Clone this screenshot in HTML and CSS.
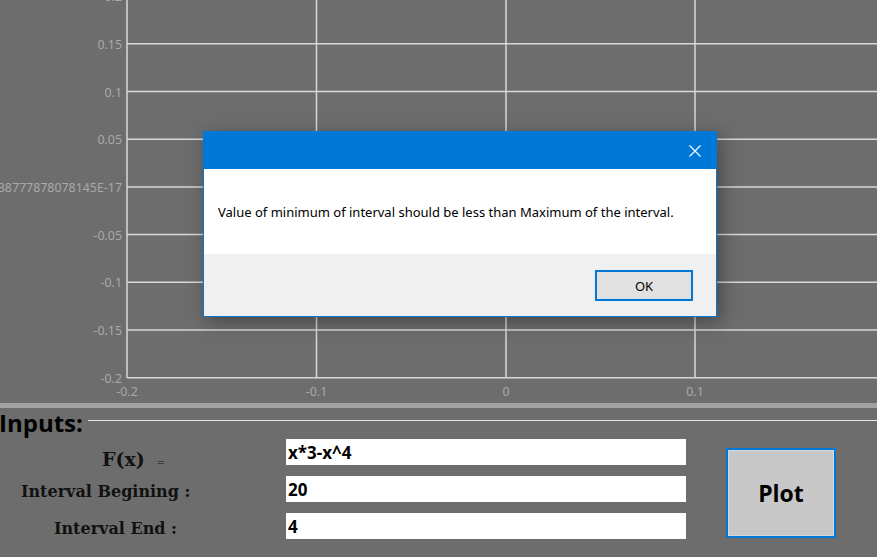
FILE: index.html
```html
<!DOCTYPE html>
<html lang="en">
<head>
<meta charset="utf-8">
<title>Function Plotter</title>
<link rel="stylesheet" href="styles.css">
</head>
<body>
<div class="app">
  <div class="chart">
    <svg class="plot" width="877" height="403" viewBox="0 0 877 403">
      <g class="grid">
        <line x1="127" y1="-4" x2="877" y2="-4"/>
        <line x1="127" y1="43.8" x2="877" y2="43.8"/>
        <line x1="127" y1="91.5" x2="877" y2="91.5"/>
        <line x1="127" y1="139.2" x2="877" y2="139.2"/>
        <line x1="127" y1="186.9" x2="877" y2="186.9"/>
        <line x1="127" y1="234.6" x2="877" y2="234.6"/>
        <line x1="127" y1="282.3" x2="877" y2="282.3"/>
        <line x1="127" y1="330" x2="877" y2="330"/>
        <line x1="127" y1="377.7" x2="877" y2="377.7"/>
        <line x1="127" y1="-4" x2="127" y2="377.7"/>
        <line x1="316.5" y1="-4" x2="316.5" y2="377.7"/>
        <line x1="506" y1="-4" x2="506" y2="377.7"/>
        <line x1="695" y1="-4" x2="695" y2="377.7"/>
      </g>
      <g class="ticks y-ticks">
        <text x="122" y="1">0.2</text>
        <text x="122" y="48.8">0.15</text>
        <text x="122" y="96.5">0.1</text>
        <text x="122" y="144.2">0.05</text>
        <text x="122" y="191.9">-1.38777878078145E-17</text>
        <text x="122" y="239.6">-0.05</text>
        <text x="122" y="287.3">-0.1</text>
        <text x="122" y="335">-0.15</text>
        <text x="122" y="382.7">-0.2</text>
      </g>
      <g class="ticks x-ticks">
        <text x="127" y="396">-0.2</text>
        <text x="316.5" y="396">-0.1</text>
        <text x="506" y="396">0</text>
        <text x="695" y="396">0.1</text>
        <text x="885" y="396">0.2</text>
      </g>
    </svg>
  </div>
  <div class="splitter"></div>
  <section class="inputs">
    <div class="group-head">
      <span class="group-title">Inputs:</span>
      <span class="group-line"></span>
    </div>
    <div class="form">
      <div class="label label-fx"><span class="fx">F(x)</span><span class="eq">=</span></div>
      <input class="field field-1" type="text" value="x*3-x^4">
      <button class="plot-btn" type="button">Plot</button>
      <div class="label label-begin">Interval Begining :</div>
      <input class="field" type="text" value="20">
      <div class="label label-end">Interval End :</div>
      <input class="field" type="text" value="4">
    </div>
  </section>

  <div class="dialog" role="dialog">
    <div class="dialog-title">
      <svg class="close-x" width="12" height="12" viewBox="0 0 12 12">
        <path d="M0.5 0.5 L11.5 11.5 M11.5 0.5 L0.5 11.5"/>
      </svg>
    </div>
    <div class="dialog-body">Value of minimum of interval should be less than Maximum of the interval.</div>
    <div class="dialog-footer">
      <button class="ok-btn" type="button">OK</button>
    </div>
  </div>
</div>
</body>
</html>
```
FILE: styles.css
```css
html, body {
  margin: 0;
  padding: 0;
}
body {
  background: #6d6d6d;
  width: 877px;
  height: 557px;
  overflow: hidden;
  font-family: "Noto Sans", "Open Sans", sans-serif;
}
.app {
  position: relative;
  width: 877px;
  height: 557px;
  display: flex;
  flex-direction: column;
}
.chart {
  height: 403px;
  overflow: hidden;
}
.plot {
  display: block;
  overflow: hidden;
}
.grid line {
  stroke: #d9d9d9;
  stroke-width: 1.5;
}
.ticks text {
  fill: #a9a9a9;
  font-family: "Noto Sans", "Open Sans", sans-serif;
  font-size: 12.4px;
}
.y-ticks text {
  text-anchor: end;
}
.x-ticks text {
  text-anchor: middle;
}
.splitter {
  height: 5px;
  background: #a3a3a3;
}
.inputs {
  flex: 1;
}
.group-head {
  display: flex;
  align-items: flex-start;
  padding-top: 1px;
  height: 28px;
}
.group-title {
  font-family: "Open Sans", "Noto Sans", sans-serif;
  font-weight: 700;
  font-size: 24px;
  line-height: 28px;
  color: #000;
  margin-left: -1px;
}
.group-line {
  flex: 1;
  height: 1px;
  background: #e6e6e6;
  margin-top: 11px;
  margin-left: 5px;
}
.form {
  margin-top: 2px;
  display: grid;
  grid-template-columns: 286px 400px 40px 110px;
  grid-template-rows: 26px 26px 26px;
  row-gap: 11px;
}
.label {
  grid-column: 1;
  font-family: "DejaVu Serif", "Liberation Serif", serif;
  font-weight: 700;
  font-size: 16px;
  line-height: 20px;
  color: #111;
  white-space: nowrap;
}
.label-fx {
  grid-row: 1;
  padding-top: 10px;
  padding-left: 102px;
  display: flex;
  align-items: baseline;
}
.fx {
  font-size: 19px;
}
.eq {
  font-size: 10px;
  margin-left: 12px;
  font-weight: 400;
}
.label-begin {
  grid-row: 2;
  padding-top: 6px;
  padding-left: 21px;
}
.label-end {
  grid-row: 3;
  padding-top: 6px;
  padding-left: 54px;
}
.field {
  grid-column: 2;
  box-sizing: border-box;
  width: 400px;
  height: 26px;
  border: none;
  outline: none;
  margin: 0;
  padding: 0 2px;
  background: #fff;
  color: #000;
  font-family: "Open Sans", "Noto Sans", sans-serif;
  font-weight: 700;
  font-size: 17px;
}
.field-1 {
  grid-row: 1;
}
.plot-btn {
  grid-column: 4;
  grid-row: 1 / span 3;
  align-self: start;
  margin-top: 9px;
  height: 90px;
  width: 110px;
  box-sizing: border-box;
  border: 2px solid #0078d7;
  box-shadow: inset 0 0 0 1px #d8d8d8;
  background: #c8c8c8;
  color: #000;
  font-family: "Open Sans", "Noto Sans", sans-serif;
  font-weight: 700;
  font-size: 23px;
  padding: 0;
}

/* Message box overlay */
.dialog {
  position: absolute;
  left: 203px;
  top: 131px;
  width: 514px;
  height: 186px;
  box-sizing: border-box;
  border: 1px solid #0078d7;
  background: #f0f0f0;
  display: flex;
  flex-direction: column;
  box-shadow: 4px 5px 18px rgba(0, 0, 0, 0.35);
}
.dialog-title {
  height: 37px;
  background: #0078d7;
  display: flex;
  align-items: center;
  justify-content: flex-end;
  padding-right: 15px;
}
.close-x path {
  stroke: #fff;
  stroke-width: 1.1;
  fill: none;
}
.dialog-body {
  height: 85px;
  box-sizing: border-box;
  background: #fff;
  padding: 35px 0 0 14px;
  font-family: "Noto Sans", "Open Sans", sans-serif;
  font-size: 13px;
  line-height: 16px;
  color: #000;
  white-space: nowrap;
}
.dialog-footer {
  flex: 1;
  display: flex;
  justify-content: flex-end;
  align-items: flex-start;
  padding: 16px 23px 0 0;
}
.ok-btn {
  width: 98px;
  height: 31px;
  box-sizing: border-box;
  border: 2px solid #0078d7;
  background: #e1e1e1;
  font-family: "Noto Sans", "Open Sans", sans-serif;
  font-size: 13px;
  color: #000;
  padding: 0;
}
```
